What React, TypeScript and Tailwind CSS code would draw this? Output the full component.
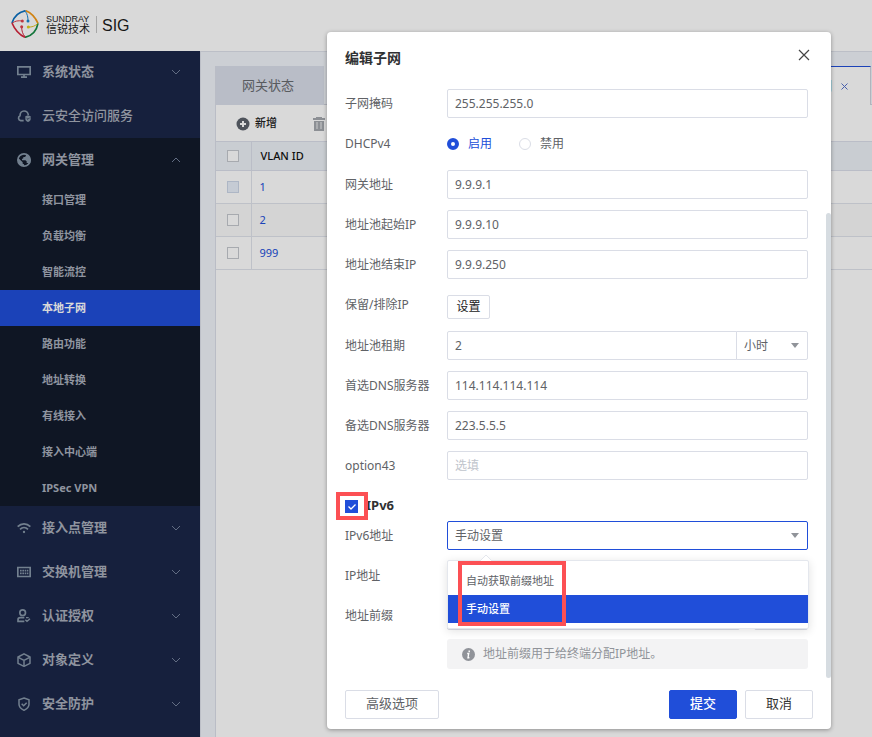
import { useState } from "react";
import type { ReactNode } from "react";
import { clsx } from "clsx";

const iconPaths: Record<string, ReactNode> = {
  monitor: (
    <g fill="none" stroke="currentColor" strokeWidth="5">
      <path d="M2.5 5.5h37v23h-37z" />
      <path d="M21 29v7M12 36.5h18" />
    </g>
  ),
  cloud: (
    <g fill="none" stroke="currentColor" strokeWidth="5">
      <path d="M20 35H11a8 8 0 0 1-2-15c0-8 5-14 12-14s12 5 13 12" />
      <path d="M25 22l8-3 8 3v8c0 4-3 7-8 9-5-2-8-5-8-9z" fill="currentColor" stroke="none" />
      <path d="M29 28l4 3 5-5" stroke="#1b2648" strokeWidth="2.5" />
    </g>
  ),
  globe: (
    <g>
      <circle cx="21" cy="21" r="18.5" fill="none" stroke="currentColor" strokeWidth="5" />
      <path
        d="M3 14l14 14v4l4 2v5C8 38 2 30 3 14zM27 4v4l-3 4h-5v4l-4 2v4h10l4 3v5h4l4 4c7-9 6-23-10-30z"
        fill="currentColor"
      />
    </g>
  ),
  wifi: (
    <g fill="none" stroke="currentColor" strokeWidth="5">
      <path d="M2 17c11-11 27-11 38 0M9 25c7-7 17-7 24 0" />
      <circle cx="21" cy="33" r="3.5" fill="currentColor" stroke="none" />
    </g>
  ),
  switch: (
    <g fill="none" stroke="currentColor" strokeWidth="5">
      <path d="M2.5 7.5h37v27h-37z" />
      <path d="M9 17h5M16 17h5M23 17h4M29 17h5M9 25h5M16 25h5M23 25h4M29 25h5" />
    </g>
  ),
  user: (
    <g fill="none" stroke="currentColor" strokeWidth="5">
      <circle cx="17" cy="11" r="8.5" />
      <path d="M22 26H10c-4 0-7 3-7 6v5h19" />
      <path d="M35 26h-8M25 32l5 5 9-8" strokeWidth="4" />
    </g>
  ),
  box: (
    <g fill="none" stroke="currentColor" strokeWidth="4.5" strokeLinejoin="round">
      <path d="M21 2.5l18 9.5v19l-18 9-18-9V12z" />
      <path d="M4 13l17 9 17-9M21 22v17" />
    </g>
  ),
  shield: (
    <g fill="none" stroke="currentColor" strokeWidth="4.5">
      <path d="M21 3l15 5v14c0 8-6 14-15 18C12 36 6 30 6 22V8z" />
      <path d="M14 20l6 6 9-9" />
    </g>
  ),
};

const topMenus = [
  { icon: "monitor", label: "系统状态", arrow: true },
  { icon: "cloud", label: "云安全访问服务", arrow: false },
];

const gatewayItems = [
  "接口管理",
  "负载均衡",
  "智能流控",
  "本地子网",
  "路由功能",
  "地址转换",
  "有线接入",
  "接入中心端",
  "IPSec VPN",
];

const bottomMenus = [
  { icon: "wifi", label: "接入点管理" },
  { icon: "switch", label: "交换机管理" },
  { icon: "user", label: "认证授权" },
  { icon: "box", label: "对象定义" },
  { icon: "shield", label: "安全防护" },
];

const vlans = ["1", "2", "999"];

function Logo() {
  return (
    <svg viewBox="0 0 84 84" className="size-7" fill="none" strokeWidth="5">
      <path d="M3 39C9 19 22 6 44 2" stroke="#0a70c0" />
      <path d="M44 2c16 6 29 20 37 38" stroke="#f59a17" />
      <path d="M81 40C77 61 64 77 42 82" stroke="#178b46" />
      <path d="M42 82C24 74 11 58 3 39" stroke="#d6263c" />
      <g strokeWidth="3">
        <path d="M4 39c8-6 18-8 29-6" stroke="#e0414c" />
        <path d="M43 4c6 8 8 17 8 28" stroke="#1685cf" />
        <path d="M32 51c0 12 3 21 10 29" stroke="#d6263c" />
        <path d="M52 51c11 1 20-3 28-10" stroke="#e3c31e" />
      </g>
      <circle cx="34" cy="33" r="4.5" fill="#e0414c" />
      <circle cx="51" cy="33" r="4.5" fill="#1685cf" />
      <circle cx="32" cy="50" r="4.5" fill="#e0414c" />
      <circle cx="52" cy="51" r="4.5" fill="#e3d31e" />
    </svg>
  );
}

function Chevron({ up = false }: { up?: boolean }) {
  return (
    <svg viewBox="0 0 10 6" className="ml-auto h-[6px] w-[10px]" fill="none" stroke="#74809a">
      <path d={up ? "M1 5l4-4 4 4" : "M1 1l4 4 4-4"} />
    </svg>
  );
}

function MenuRow({ icon, label, arrow = true, up = false }: { icon: string; label: string; arrow?: boolean; up?: boolean }) {
  return (
    <button
      type="button"
      className={clsx(
        "flex h-11 w-full items-center pr-[19px] pl-[17px] text-[13px]",
        arrow ? "font-bold" : "font-medium"
      )}
    >
      <svg viewBox="0 0 42 42" className="mr-[11px] size-[14px] shrink-0 text-[#8797a8]">
        {iconPaths[icon]}
      </svg>
      {label}
      {arrow && <Chevron up={up} />}
    </button>
  );
}

function Sidebar() {
  return (
    <nav className="w-[200px] shrink-0 bg-[#1b2648] text-[#a8aebb]">
      <div className="-mt-px">
        {topMenus.map((m) => (
          <MenuRow key={m.label} {...m} />
        ))}
      </div>
      <div className="bg-[#121a2b]">
        <MenuRow icon="globe" label="网关管理" up />
        {gatewayItems.map((item) => (
          <a
            key={item}
            href="#"
            className={clsx(
              "flex h-9 items-center pl-[42px] text-[11px] font-bold",
              item === "本地子网" && "bg-[#204ed9] text-white"
            )}
          >
            {item}
          </a>
        ))}
      </div>
      {bottomMenus.map((m) => (
        <MenuRow key={m.label} {...m} />
      ))}
    </nav>
  );
}

function Content() {
  return (
    <main className="flex min-w-0 flex-1 flex-col border-t border-l border-[#dde1ea] bg-[#f0f4fa] pt-[14px] pl-[14px]">
      <div className="flex h-[39px] border-l border-[#dbdee9]">
        <button type="button" className="w-[108px] bg-[#dadeea] pr-1 text-[13px] text-[#686b70]">
          网关状态
        </button>
        <div className="w-2 border-b border-[#d0d4df]" />
        <div className="flex flex-1 items-center justify-end border-t border-r border-t-[#204ed9] border-r-[#d0d4df] bg-white pr-[22px]">
          <span className="text-[13px] text-[#204ed9]">本地子网</span>
          <button type="button" aria-label="关闭标签" className="ml-[9px]">
            <svg viewBox="0 0 7 7" className="size-[7px]" stroke="#5570cc">
              <path d="M0.5 0.5l6 6M6.5 0.5l-6 6" />
            </svg>
          </button>
        </div>
        <div className="w-px border-b border-[#d0d4df]" />
      </div>
      <div className="flex-1 border-l border-[#dbdee9] bg-white">
        <div className="flex h-9 items-center pt-px pl-5 text-[11px]">
          <button type="button" className="flex items-center gap-[5px] font-medium text-[#222]">
            <svg viewBox="0 0 14 14" className="size-[14px]">
              <circle cx="7" cy="7" r="6.5" fill="#5c626c" />
              <path d="M7 4v6M4 7h6" stroke="#fff" strokeWidth="2" />
            </svg>
            新增
          </button>
          <button type="button" aria-label="删除" className="ml-9">
            <svg viewBox="0 0 12 14" className="h-[14px] w-3" fill="#a5a8ae">
              <path d="M0 1h3V0h6v1h3v2H0zM1 4h10v10H1z" />
              <path d="M4 5v7M8 5v7" stroke="#d5d7da" strokeWidth="1.5" />
            </svg>
          </button>
        </div>
        <table className="w-full border-collapse text-[11px]">
          <thead>
            <tr className="h-[29px] border-y border-[#dbdfea] bg-[#edf1f7] text-left text-[#111]">
              <th className="w-[35px] border-r border-[#dbdfea] pl-[11px]">
                <input type="checkbox" aria-label="全选" className="block size-3 appearance-none border border-[#c5c8ce] bg-white" />
              </th>
              <th className="pl-[9px] font-medium">VLAN ID</th>
            </tr>
          </thead>
          <tbody>
            {vlans.map((id) => (
              <tr key={id} className="h-[33px] border-b border-[#e0e3eb] even:bg-[#fafafa]">
                <td className="border-r border-[#e0e3eb] pl-[11px]">
                  <input
                    type="checkbox"
                    aria-label={`VLAN ${id}`}
                    disabled={id === "1"}
                    className="block size-3 appearance-none border border-[#c5c8ce] bg-white disabled:border-[#ccd6e8] disabled:bg-[#e8effa]"
                  />
                </td>
                <td className="pl-2">
                  <a href="#" className="text-[11px] text-[#204ed9]">{id}</a>
                </td>
              </tr>
            ))}
          </tbody>
        </table>
      </div>
    </main>
  );
}

const field = "h-[29px] rounded-[2px] border bg-white px-[7px] text-xs text-[#606266] outline-none placeholder:text-[#c0c4cc]";
const box = `${field} border-[#dadde6]`;

function Row({ label, id, className = "h-10", children }: { label: string; id: string; className?: string; children: ReactNode }) {
  return (
    <div className={clsx("flex items-start", className)}>
      <label htmlFor={id} className="flex h-[29px] w-[102px] shrink-0 items-center">
        {label}
      </label>
      <div className="relative flex min-w-0 flex-1">{children}</div>
    </div>
  );
}

function Caret() {
  return (
    <svg viewBox="0 0 8 5" className="pointer-events-none absolute top-3 right-[9px] h-[5px] w-2" fill="#909399">
      <path d="M0 0h8L4 5z" />
    </svg>
  );
}

function TextRow({ label, id, value, placeholder }: { label: string; id: string; value?: string; placeholder?: string }) {
  return (
    <Row label={label} id={id}>
      <input id={id} defaultValue={value} placeholder={placeholder} className={clsx(box, "w-full")} />
    </Row>
  );
}

function SubnetForm() {
  const [mode, setMode] = useState("手动设置");
  const radio =
    "size-3 appearance-none rounded-full border border-[#dadde6] bg-white checked:border-4 checked:border-[#204ed9]";

  return (
    <form id="subnet" className="pt-[5px] pr-[23px] pl-[18px] text-xs text-[#606266]">
      <TextRow label="子网掩码" id="mask" value="255.255.255.0" />
      <Row label="DHCPv4" id="dhcp-on" className="h-[41px]">
        <div className="flex h-[29px] items-center">
          <input id="dhcp-on" type="radio" name="dhcp" defaultChecked className={radio} />
          <label htmlFor="dhcp-on" className="ml-[9px] text-[#204ed9]">启用</label>
          <input id="dhcp-off" type="radio" name="dhcp" className={clsx(radio, "ml-[27px]")} />
          <label htmlFor="dhcp-off" className="ml-[9px]">禁用</label>
        </div>
      </Row>
      <TextRow label="网关地址" id="gateway" value="9.9.9.1" />
      <TextRow label="地址池起始IP" id="start" value="9.9.9.10" />
      <TextRow label="地址池结束IP" id="end" value="9.9.9.250" />
      <Row label="保留/排除IP" id="reserve" className="h-[41px]">
        <div className="flex h-[29px] items-center pt-1">
          <button id="reserve" type="button" className="h-6 w-[43px] rounded-[2px] border border-[#dadde6] text-[#222]">
            设置
          </button>
        </div>
      </Row>
      <Row label="地址池租期" id="lease">
        <input id="lease" defaultValue="2" className={clsx(box, "min-w-0 flex-1 rounded-r-none")} />
        <select aria-label="租期单位" defaultValue="小时" className={clsx(box, "-ml-px w-[72px] appearance-none rounded-l-none")}>
          <option>小时</option>
          <option>天</option>
        </select>
        <Caret />
      </Row>
      <TextRow label="首选DNS服务器" id="dns1" value="114.114.114.114" />
      <TextRow label="备选DNS服务器" id="dns2" value="223.5.5.5" />
      <TextRow label="option43" id="option43" placeholder="选填" />

      <div className="relative flex h-[30px] items-center">
        <span className="relative flex">
          <input
            id="ipv6"
            type="checkbox"
            defaultChecked
            className="peer size-[13px] appearance-none border border-[#dadde6] checked:border-[#204ed9] checked:bg-[#204ed9]"
          />
          <svg viewBox="0 0 13 13" className="pointer-events-none absolute inset-0 hidden size-[13px] peer-checked:block" fill="none" stroke="#fff" strokeWidth="1.3">
            <path d="M3.5 6.5l2.5 2.5L10.5 4.5" />
          </svg>
        </span>
        <label htmlFor="ipv6" className="ml-2 text-[13px] font-bold text-[#303133]">IPv6</label>
        <span className="pointer-events-none absolute top-px -left-[9px] h-7 w-8 border-4 border-[#fc5054]" />
      </div>

      <Row label="IPv6地址" id="ipv6-mode">
        <select
          id="ipv6-mode"
          value={mode}
          onChange={(e) => setMode(e.target.value)}
          className={clsx(field, "w-full appearance-none border-[#204ed9]")}
        >
          <option>自动获取前缀地址</option>
          <option>手动设置</option>
        </select>
        <Caret />
        {/* opened menu */}
        <div className="absolute top-[39px] -right-px left-0 z-10 rounded-[2px] border border-[#e4e7ed] bg-white pt-[6px] pb-[5px] text-[11px] shadow-[0_2px_10px_rgba(0,0,0,0.12)]">
          <svg viewBox="0 0 12 6" className="absolute -top-[6px] left-8 h-[6px] w-3">
            <path d="M0 6l6-6 6 6z" fill="#fff" />
            <path d="M0 6l6-6 6 6" fill="none" stroke="#e4e7ed" />
          </svg>
          {["自动获取前缀地址", "手动设置"].map((option) => (
            <button
              key={option}
              type="button"
              onClick={() => setMode(option)}
              className={clsx(
                "flex h-7 w-full items-center pl-[18px]",
                option === mode && "bg-[#204ed9] font-medium text-white"
              )}
            >
              {option}
            </button>
          ))}
          <span className="pointer-events-none absolute top-0 left-[10px] h-[65px] w-[108px] border-4 border-[#fc5054]" />
        </div>
      </Row>
      <TextRow label="IP地址" id="ipv6-ip" />
      <Row label="地址前缀" id="prefix" className="h-[38px]">
        <input id="prefix" className={clsx(box, "min-w-0 flex-1")} />
        <span className="flex w-[14px] items-center justify-center">/</span>
        <input aria-label="前缀长度" className={clsx(box, "w-[54px]")} />
      </Row>
      <p className="ml-[102px] flex h-[30px] items-center gap-2 rounded-[3px] bg-[#f3f3f4] pl-[15px] text-[#909399]">
        <svg viewBox="0 0 13 13" className="size-[13px]">
          <circle cx="6.5" cy="6.5" r="6.5" fill="#909399" />
          <path d="M7.4 2.5l-.3 1.6M5.2 5.5h1.5l-.7 4.2h1.4" fill="none" stroke="#fff" strokeWidth="1.4" />
        </svg>
        地址前缀用于给终端分配IP地址。
      </p>
    </form>
  );
}

function SubnetDialog() {
  const button = "h-[29px] rounded-[2px] border pb-[2px] text-[13px]";

  return (
    <div className="absolute inset-0 flex items-start justify-end bg-black/15 pt-8 pr-[41px] pl-8">
      <div role="dialog" aria-label="编辑子网" className="w-full max-w-[504px] rounded-[4px] bg-white pb-[10px] shadow-[0_1px_4px_rgba(0,0,0,0.35)]">
        <div className="flex h-[52px] items-center justify-between pr-[22px] pl-[18px]">
          <h2 className="text-sm font-bold text-[#303133]">编辑子网</h2>
          <button type="button" aria-label="关闭" className="mb-[6px]">
            <svg viewBox="0 0 10 10" className="size-[10px] overflow-visible" stroke="#444" strokeWidth="1.2">
              <path d="M0 0l10 10M10 0L0 10" />
            </svg>
          </button>
        </div>
        <div className="relative pb-[9px]">
          <SubnetForm />
          <span className="absolute right-0 bottom-0 h-[465px] w-[5px] rounded-full bg-[#d6dce1]" />
        </div>
        <div className="flex gap-2 px-[18px] pt-3">
          <button type="button" className={clsx(button, "mr-auto w-[94px] border-[#dadde6] text-[#606266]")}>高级选项</button>
          <button type="submit" form="subnet" className={clsx(button, "w-[68px] border-[#204ed9] bg-[#204ed9] font-medium text-white")}>提交</button>
          <button type="button" className={clsx(button, "w-[68px] border-[#dadde6] text-[#333]")}>取消</button>
        </div>
      </div>
    </div>
  );
}

export default function App() {
  return (
    <div className="relative flex h-screen flex-col overflow-hidden bg-white font-['Noto_Sans','Noto_Sans_CJK_SC',sans-serif]">
      <header className="flex h-[51px] shrink-0 items-center pb-[3px] pl-[11px] text-[#1c1c1c]">
        <Logo />
        <div className="ml-[7px] font-['Liberation_Sans','Noto_Sans_CJK_SC',sans-serif] text-[11px] leading-[10px]">
          <div className="text-[9px]">SUNDRAY</div>
          <div>信锐技术</div>
        </div>
        <span className="ml-[6px] h-[17px] w-px bg-[#c4c4c4]" />
        <span className="ml-[5px] pt-[3px] font-['Liberation_Sans',sans-serif] text-base">SIG</span>
      </header>
      <div className="flex min-h-0 flex-1">
        <Sidebar />
        <Content />
      </div>
      <SubnetDialog />
    </div>
  );
}
